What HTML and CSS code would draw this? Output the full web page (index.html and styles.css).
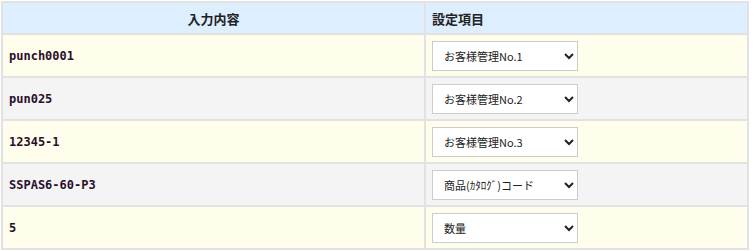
FILE: index.html
```html
<!doctype html>
<html>
<head>
<meta charset="UTF-8">
<title>項目設定</title>
<link rel="stylesheet" href="styles.css">
</head>
<body>
  <table class="map">
    <thead>
      <tr>
        <th class="src">入力内容</th>
        <th class="dst">設定項目</th>
      </tr>
    </thead>
    <tbody>
      <tr class="odd">
        <td class="val">punch0001</td>
        <td><select><option>お客様管理No.1</option></select></td>
      </tr>
      <tr class="even">
        <td class="val">pun025</td>
        <td><select><option>お客様管理No.2</option></select></td>
      </tr>
      <tr class="odd">
        <td class="val">12345-1</td>
        <td><select><option>お客様管理No.3</option></select></td>
      </tr>
      <tr class="even">
        <td class="val">SSPAS6-60-P3</td>
        <td><select><option>商品(ｶﾀﾛｸﾞ)コード</option></select></td>
      </tr>
      <tr class="odd">
        <td class="val">5</td>
        <td><select><option>数量</option></select></td>
      </tr>
    </tbody>
  </table>
</body>
</html>
```

FILE: styles.css
```css
body {
  margin: 0;
  padding: 1px 0 0 1px;
  background-color: #fff;
  font-family: "Noto Sans CJK JP", sans-serif;
}
.map {
  width: 748px;
  border-collapse: collapse;
  border: 2px solid #e2e2e2;
}
.map th,
.map td {
  border: 2px solid #e2e2e2;
  padding: 0 6px;
}
.map th {
  height: 30px;
  background-color: #ddeeff;
  color: #222;
  font-size: 13px;
  font-weight: bold;
}
.map th.src {
  width: 409px;
  text-align: center;
}
.map th.dst {
  text-align: left;
}
.map td {
  height: 41px;
}
.map tr.odd td {
  background-color: #fffdec;
}
.map tr.even td {
  background-color: #f4f4f5;
}
.val {
  font-family: "DejaVu Sans Mono", monospace;
  font-size: 12px;
  font-weight: bold;
  color: #2a0f2a;
}
select {
  width: 146px;
  height: 30px;
  padding: 0 7px;
  background-color: #fff;
  border: 1px solid #ccc;
  border-radius: 0;
  font-family: "Noto Sans CJK JP", sans-serif;
  font-size: 11px;
  color: #222;
}
```
